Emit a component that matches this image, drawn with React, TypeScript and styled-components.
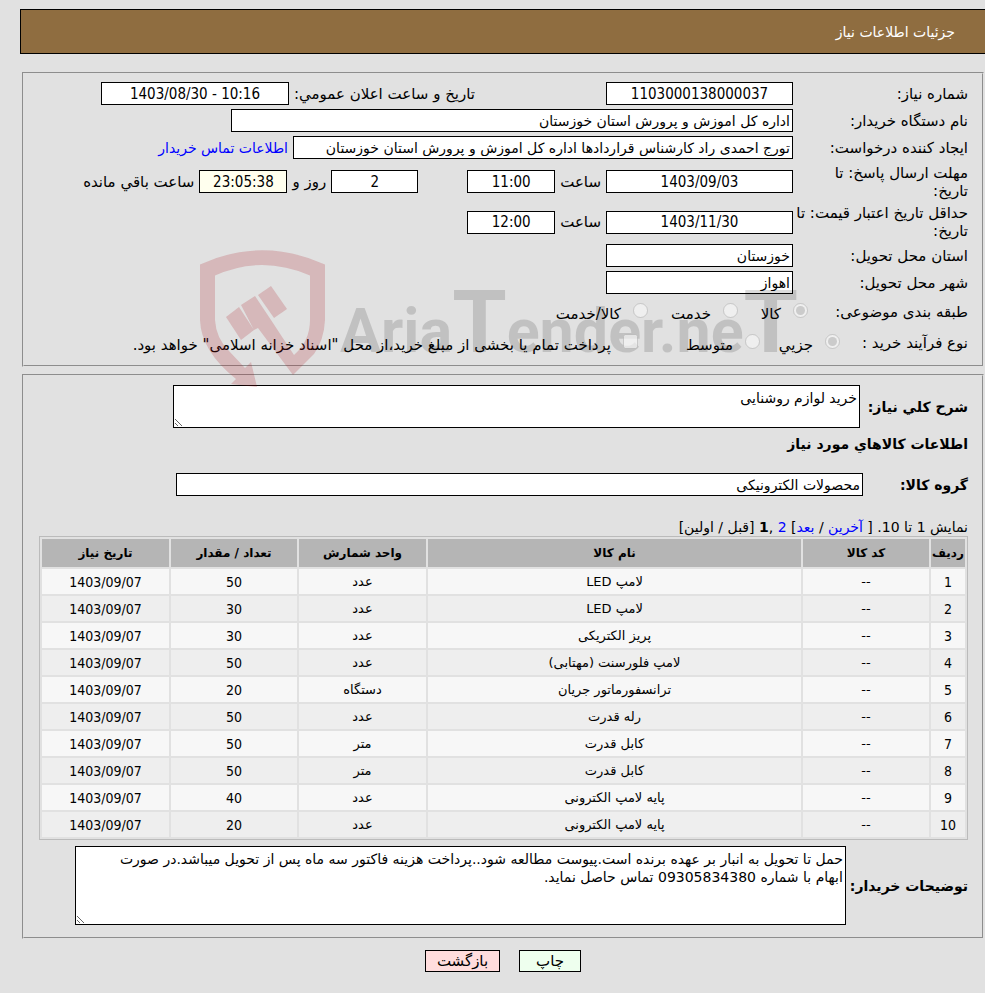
import React from "react";
import styled, { createGlobalStyle } from "styled-components";

const GlobalStyle = createGlobalStyle`
  *, *::before, *::after { box-sizing: border-box; }
  body {
    margin: 0;
    background: #e1e1e1;
    color: #000;
    font: 14px/18px "DejaVu Sans", sans-serif;
  }
  input, textarea, button { font: inherit; color: inherit; }
`;

const numeric = `"DejaVu Sans Condensed", "DejaVu Sans", sans-serif`;

const Page = styled.main`
  position: relative;
  direction: rtl;
  padding: 9px 0 22px 20px;
`;

const TitleBar = styled.header`
  display: flex;
  align-items: center;
  height: 45px;
  padding: 0 30px;
  border: 1px solid #000;
  border-right: 0;
  background: #8f6d40;
`;

const Title = styled.h1`
  margin: 0;
  font-size: 14px;
  font-weight: normal;
  color: #fff;
`;

const Panel = styled.section<{ $first?: boolean }>`
  margin: ${(p) => (p.$first ? "18px" : "7px")} 1px 0 2px;
  padding: ${(p) => (p.$first ? "6px 14px 7px 15px" : "9px 14px 12px 15px")};
  border: 2px groove #e1e1e1;
`;

const Row = styled.div<{ $h?: number }>`
  display: flex;
  align-items: center;
  min-height: ${(p) => p.$h ?? 27}px;
`;

const Caption = styled.label`
  flex: none;
  width: 175px;
  font-size: 15px;
  white-space: nowrap;
`;

const Fields = styled.div`
  display: flex;
  flex: 1;
  align-items: center;
  gap: 5px;
  min-width: 0;
`;

const Box = styled.input<{ $w: number; $center?: boolean; $tint?: boolean }>`
  width: ${(p) => p.$w}px;
  min-width: 0;
  height: 23px;
  padding: 1px 2px;
  border: 1px solid #000;
  border-radius: 0;
  background: ${(p) => (p.$tint ? "#ffffee" : "#fff")};
  direction: ${(p) => (p.$center ? "ltr" : "rtl")};
  text-align: ${(p) => (p.$center ? "center" : "right")};
  ${(p) => p.$center && `font-family: ${numeric}; font-size: 15px;`}
  outline: 0;
`;

const Unit = styled.label`
  flex: none;
  font-size: 15px;
  white-space: nowrap;
`;

const Spacer = styled.span<{ $w: number }>`
  flex: none;
  width: ${(p) => p.$w}px;
`;

const Link = styled.a`
  color: #0000ff;
  text-decoration: none;
  white-space: nowrap;
`;

const Choices = styled.div<{ $indent: number }>`
  display: flex;
  align-items: center;
  margin-right: ${(p) => p.$indent}px;
`;

const Choice = styled.label<{ $w?: number }>`
  display: flex;
  flex: none;
  align-items: center;
  gap: 12px;
  width: ${(p) => (p.$w ? `${p.$w}px` : "auto")};
  font-size: 15px;
  white-space: nowrap;

  input {
    position: relative;
    z-index: 1;
    flex: none;
    width: 15px;
    height: 15px;
    margin: 0 0 4px;
  }
  span { padding-top: 3px; }
`;

const BoldCaption = styled.label<{ $w?: number }>`
  flex: none;
  width: ${(p) => (p.$w ? `${p.$w}px` : "auto")};
  font-weight: bold;
  white-space: nowrap;
`;

const Area = styled.textarea<{ $w: number; $h: number; $end?: number }>`
  display: block;
  width: ${(p) => p.$w}px;
  min-width: 0;
  height: ${(p) => p.$h}px;
  padding: 3px 2px 3px ${(p) => p.$end ?? 2}px;
  border: 1px solid #000;
  border-radius: 0;
  background: #fff;
  line-height: 18px;
  overflow: hidden;
  resize: both;
  outline: 0;
`;

const Heading = styled.h2`
  margin: 7px 0 11px;
  font-size: 14px;
  line-height: 18px;
`;

const Pager = styled.nav`
  margin-top: 13px;
  line-height: 18px;
`;

const Goods = styled.table`
  width: 100%;
  border: 1px solid #bbb;
  border-collapse: separate;
  border-spacing: 2px;
  table-layout: fixed;
  font-size: 13px;
  line-height: 16px;
  text-align: center;

  th {
    height: 28px;
    padding: 0;
    background: #b5b5b5;
    font-size: 12px;
    font-weight: bold;
    white-space: nowrap;
  }
  td {
    height: 25px;
    padding: 0;
    background: #f7f7f7;
  }
  tbody tr:nth-child(even) td { background: #eee; }
`;

const NumberCell = styled.td`
  font-family: ${numeric};
  font-size: 14px;
`;

const Col = styled.col<{ $w?: number }>`
  width: ${(p) => (p.$w ? `${p.$w}px` : "auto")};
`;

const Notes = styled.div`
  display: flex;
  align-items: center;
  gap: 4px;
  margin-top: 6px;
`;

const Actions = styled.div`
  display: flex;
  justify-content: center;
  gap: 19px;
  margin: 11px 1px 0 2px;
`;

const Button = styled.button<{ $w: number; $bg: string }>`
  width: ${(p) => p.$w}px;
  height: 22px;
  padding: 0;
  border: 1px solid #000;
  border-radius: 0;
  background: ${(p) => p.$bg};
  font-size: 15px;
  line-height: 18px;
`;

const Watermark = styled.svg`
  position: absolute;
  top: 245px;
  left: 195px;
  width: 610px;
  height: 145px;
  pointer-events: none;
  direction: ltr;

  text {
    font-family: Roboto, "Liberation Sans", sans-serif;
    font-weight: bold;
    font-size: 61px;
  }
  tspan { font-size: 88px; }
`;

type Good = [string, string, string];
const goods: Good[] = [
  ["لامپ LED", "عدد", "50"],
  ["لامپ LED", "عدد", "30"],
  ["پریز الکتریکی", "عدد", "30"],
  ["لامپ فلورسنت (مهتابی)", "عدد", "50"],
  ["ترانسفورماتور جریان", "دستگاه", "20"],
  ["رله قدرت", "عدد", "50"],
  ["کابل قدرت", "متر", "50"],
  ["کابل قدرت", "متر", "50"],
  ["پایه لامپ الکترونی", "عدد", "40"],
  ["پایه لامپ الکترونی", "عدد", "20"],
];

function Brand() {
  return (
    <Watermark viewBox="195 245 610 145" aria-hidden="true">
      <g fill="rgb(170,20,30)" fillOpacity="0.2">
        <path d="M200 264.500Q262 236 325 264.500V320Q324 340 314 354L293 375L258 328L254 330L241 305L255 296L271 320L294 355Q310 341 310 320V275.500Q262 254.500 215 275.500V320Q216 338 229 351L245 368L251 362L257 387L231 384L236 379Q201 351 200 320Z" />
        <path d="M226 317L239 307L254 330L241 340Z" />
        <path d="M258 295L271 286L287 309L274 318Z" />
      </g>
      <text x="340" y="352" fill="#000" fillOpacity="0.14">
        Aria<tspan>T</tspan>ender.ne<tspan>T</tspan>
      </text>
    </Watermark>
  );
}

export default function App() {
  return (
    <>
      <GlobalStyle />
      <Page lang="fa">
        <TitleBar>
          <Title>جزئیات اطلاعات نیاز</Title>
        </TitleBar>

        <Panel $first>
          <Row>
            <Caption htmlFor="no">شماره نیاز:</Caption>
            <Fields>
              <Box id="no" $w={187} $center readOnly value="1103000138000037" />
              <Spacer $w={121} />
              <Unit htmlFor="announced">تاريخ و ساعت اعلان عمومي:</Unit>
              <Box id="announced" $w={188} $center readOnly value="1403/08/30 - 10:16" />
            </Fields>
          </Row>
          <Row>
            <Caption htmlFor="buyer">نام دستگاه خریدار:</Caption>
            <Fields>
              <Box id="buyer" $w={562} readOnly value="اداره کل اموزش و پرورش استان خوزستان" />
            </Fields>
          </Row>
          <Row>
            <Caption htmlFor="creator">ایجاد کننده درخواست:</Caption>
            <Fields>
              <Box id="creator" $w={500} readOnly value="تورج احمدی راد کارشناس قراردادها اداره کل اموزش و پرورش استان خوزستان" />
              <Link href="#contact">اطلاعات تماس خریدار</Link>
            </Fields>
          </Row>
          <Row $h={41}>
            <Caption htmlFor="deadline">مهلت ارسال پاسخ: تا<br />تاریخ:</Caption>
            <Fields>
              <Box id="deadline" $w={187} $center readOnly value="1403/09/03" />
              <Unit htmlFor="deadline-hour">ساعت</Unit>
              <Box id="deadline-hour" $w={88} $center readOnly value="11:00" />
              <Spacer $w={39} />
              <Box id="days" $w={87} $center readOnly value="2" />
              <Unit htmlFor="days">روز و</Unit>
              <Box id="countdown" $w={88} $center $tint readOnly value="23:05:38" />
              <Unit htmlFor="countdown">ساعت باقي مانده</Unit>
            </Fields>
          </Row>
          <Row $h={40}>
            <Caption htmlFor="validity">حداقل تاریخ اعتبار قیمت: تا<br />تاریخ:</Caption>
            <Fields>
              <Box id="validity" $w={187} $center readOnly value="1403/11/30" />
              <Unit htmlFor="validity-hour">ساعت</Unit>
              <Box id="validity-hour" $w={88} $center readOnly value="12:00" />
            </Fields>
          </Row>
          <Row>
            <Caption htmlFor="province">استان محل تحویل:</Caption>
            <Fields>
              <Box id="province" $w={187} readOnly value="خوزستان" />
            </Fields>
          </Row>
          <Row>
            <Caption htmlFor="city">شهر محل تحویل:</Caption>
            <Fields>
              <Box id="city" $w={187} readOnly value="اهواز" />
            </Fields>
          </Row>
          <Row $h={32}>
            <Caption as="span">طبقه بندی موضوعی:</Caption>
            <Choices $indent={-15}>
              <Choice $w={70}><input type="radio" name="subject" disabled defaultChecked /><span>کالا</span></Choice>
              <Choice $w={90}><input type="radio" name="subject" disabled /><span>خدمت</span></Choice>
              <Choice><input type="radio" name="subject" disabled /><span>کالا/خدمت</span></Choice>
            </Choices>
          </Row>
          <Row $h={30}>
            <Caption as="span">نوع فرآیند خرید :</Caption>
            <Choices $indent={-47}>
              <Choice $w={80}><input type="radio" name="process" disabled defaultChecked /><span>جزيي</span></Choice>
              <Choice $w={122}><input type="radio" name="process" disabled /><span>متوسط</span></Choice>
              <Choice><input type="checkbox" disabled /><span>پرداخت تمام یا بخشی از مبلغ خرید،از محل "اسناد خزانه اسلامی" خواهد بود.</span></Choice>
            </Choices>
          </Row>
        </Panel>

        <Panel>
          <Fields>
            <BoldCaption htmlFor="summary" $w={103}>شرح كلي نياز:</BoldCaption>
            <Area id="summary" $w={687} $h={43} readOnly value="خرید لوازم روشنایی" />
          </Fields>
          <Heading>اطلاعات كالاهاي مورد نياز</Heading>
          <Row $h={41}>
            <BoldCaption htmlFor="group" $w={105}>گروه کالا:</BoldCaption>
            <Box id="group" $w={687} readOnly value="محصولات الکترونیکی" />
          </Row>
          <Pager>
            نمایش 1 تا 10. [ <Link href="#last">آخرین</Link> / <Link href="#next">بعد</Link>]{" "}
            <Link href="#p2">2</Link> ,<b>1</b> [قبل / اولین]
          </Pager>
          <Goods>
            <colgroup>
              <Col $w={34} /><Col $w={126} /><Col /><Col $w={127} /><Col $w={126} /><Col $w={127} />
            </colgroup>
            <thead>
              <tr>
                <th>ردیف</th><th>کد کالا</th><th>نام کالا</th>
                <th>واحد شمارش</th><th>تعداد / مقدار</th><th>تاریخ نیاز</th>
              </tr>
            </thead>
            <tbody>
              {goods.map(([name, unit, count], i) => (
                <tr key={i}>
                  <NumberCell>{i + 1}</NumberCell>
                  <td>--</td>
                  <td>{name}</td>
                  <td>{unit}</td>
                  <NumberCell>{count}</NumberCell>
                  <NumberCell>1403/09/07</NumberCell>
                </tr>
              ))}
            </tbody>
          </Goods>
          <Notes>
            <BoldCaption htmlFor="notes">توضیحات خریدار:</BoldCaption>
            <Area id="notes" $w={771} $h={79} $end={24} readOnly value="حمل تا تحویل به انبار بر عهده برنده است.پیوست مطالعه شود..پرداخت هزینه فاکتور سه ماه پس از تحویل میباشد.در صورت ابهام با شماره 09305834380 تماس حاصل نماید." />
          </Notes>
        </Panel>

        <Actions>
          <Button type="button" $w={62} $bg="#eeffee">چاپ</Button>
          <Button type="button" $w={75} $bg="#ffdddd">بازگشت</Button>
        </Actions>
        <Brand />
      </Page>
    </>
  );
}
